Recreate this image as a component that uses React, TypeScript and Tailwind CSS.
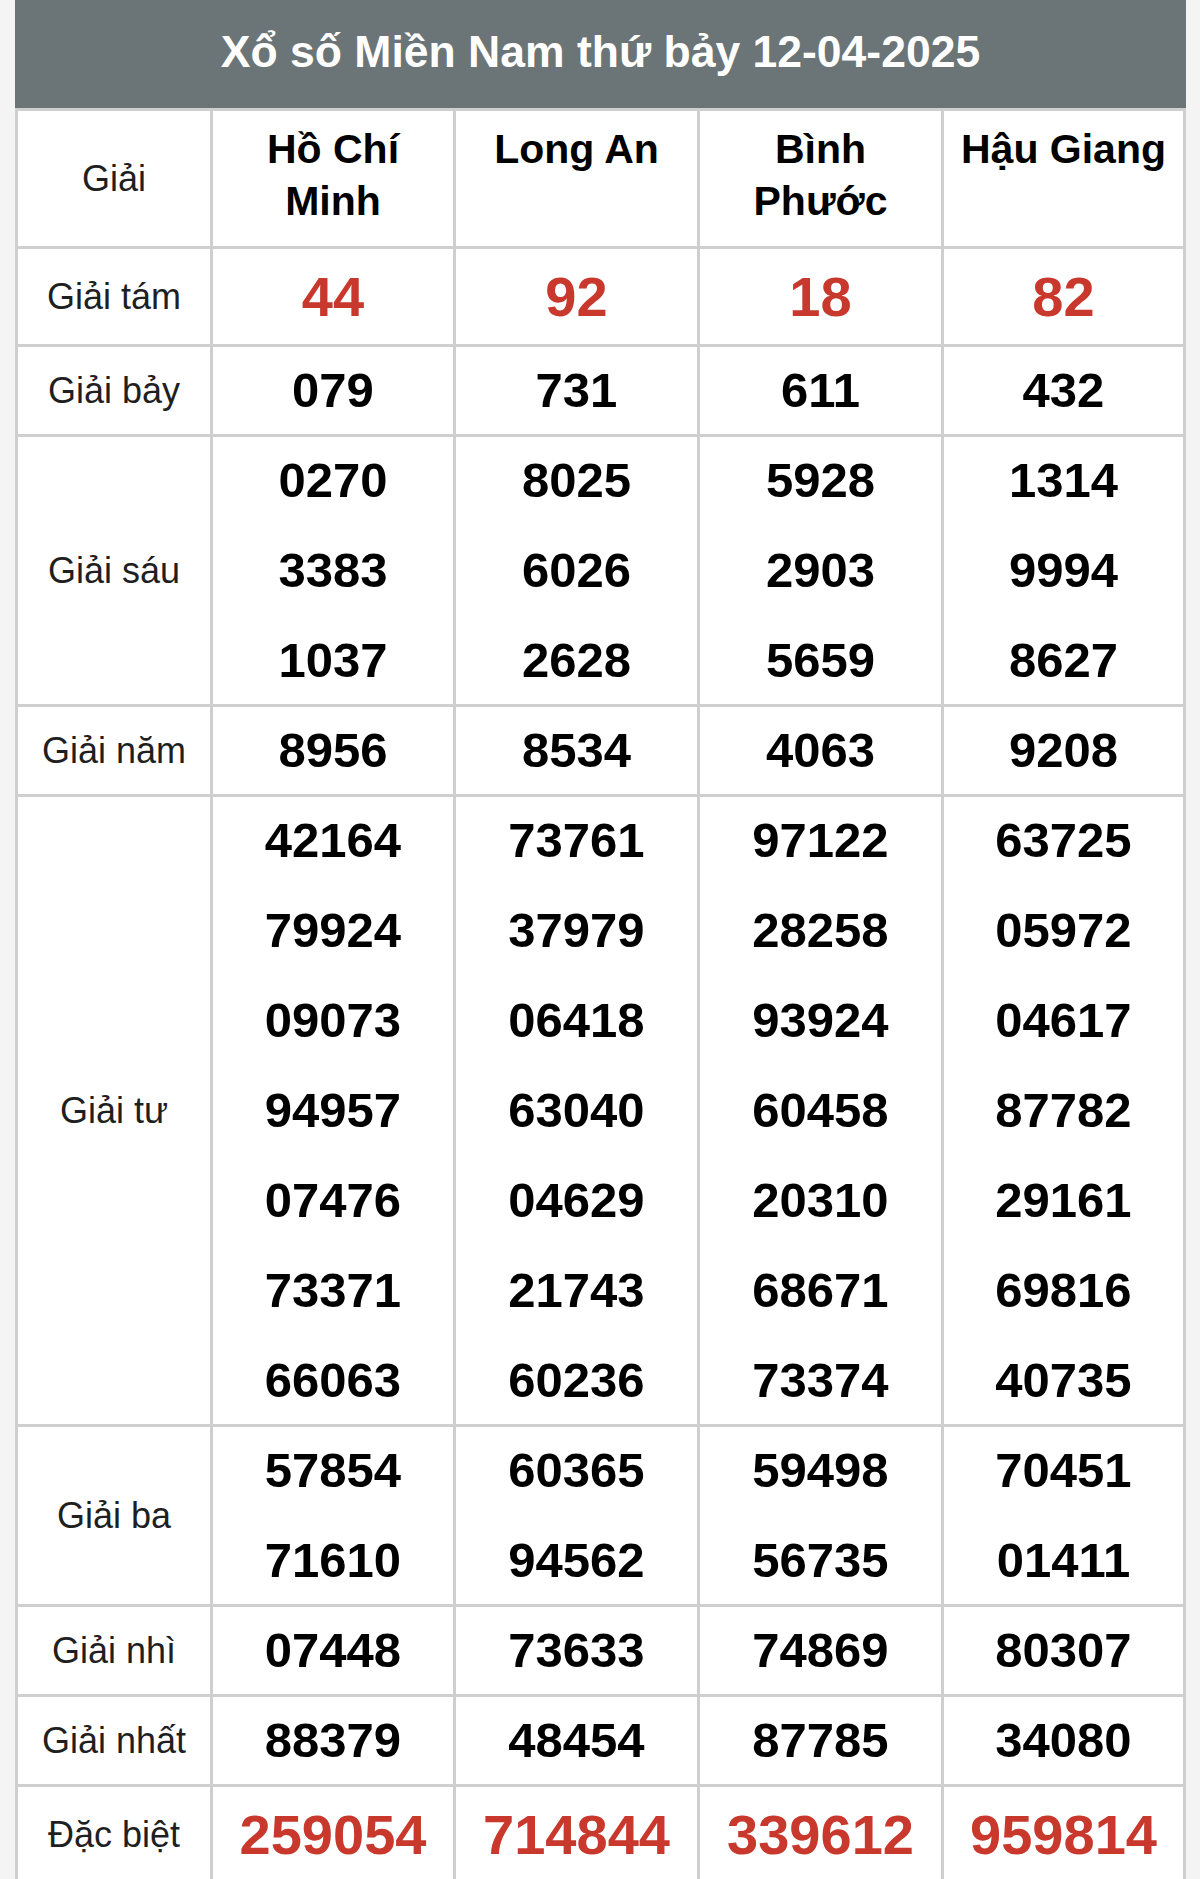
const provinces = [["Hồ Chí", "Minh"], ["Long An"], ["Bình", "Phước"], ["Hậu Giang"]];

type Row = {
  label: string;
  values: string[][];
  red?: boolean;
};

const rows: Row[] = [
  { label: "Giải tám", values: [["44"], ["92"], ["18"], ["82"]], red: true },
  { label: "Giải bảy", values: [["079"], ["731"], ["611"], ["432"]] },
  {
    label: "Giải sáu",
    values: [
      ["0270", "3383", "1037"],
      ["8025", "6026", "2628"],
      ["5928", "2903", "5659"],
      ["1314", "9994", "8627"],
    ],
  },
  { label: "Giải năm", values: [["8956"], ["8534"], ["4063"], ["9208"]] },
  {
    label: "Giải tư",
    values: [
      ["42164", "79924", "09073", "94957", "07476", "73371", "66063"],
      ["73761", "37979", "06418", "63040", "04629", "21743", "60236"],
      ["97122", "28258", "93924", "60458", "20310", "68671", "73374"],
      ["63725", "05972", "04617", "87782", "29161", "69816", "40735"],
    ],
  },
  {
    label: "Giải ba",
    values: [
      ["57854", "71610"],
      ["60365", "94562"],
      ["59498", "56735"],
      ["70451", "01411"],
    ],
  },
  { label: "Giải nhì", values: [["07448"], ["73633"], ["74869"], ["80307"]] },
  { label: "Giải nhất", values: [["88379"], ["48454"], ["87785"], ["34080"]] },
  { label: "Đặc biệt", values: [["259054"], ["714844"], ["339612"], ["959814"]], red: true },
];

export default function App() {
  return (
    <div className="min-h-screen bg-[#f4f4f4] pl-[15px] font-['Liberation_Sans',Arial,sans-serif]">
      <div className="w-[1171px]">
        <div className="flex h-[108px] items-center justify-center bg-[#6b7476] pb-1 text-[44.5px] font-bold text-white">
          Xổ số Miền Nam thứ bảy 12-04-2025
        </div>

        <div className="grid grid-cols-[192px_240px_241px_241px_239px] gap-[3px] bg-[#cfcfcf] p-[3px]">
          {/* header row */}
          <div className="flex h-[135px] items-center justify-center bg-white text-[36px] text-[#1f1f1f]">
            Giải
          </div>
          {provinces.map((lines) => (
            <div
              key={lines.join(" ")}
              className="h-[135px] bg-white pt-3 text-center text-[41px] leading-[52px] font-bold whitespace-nowrap text-black"
            >
              {lines.map((l) => (
                <div key={l}>{l}</div>
              ))}
            </div>
          ))}

          {rows.map((row) => (
            <Prize key={row.label} row={row} />
          ))}
        </div>
      </div>
    </div>
  );
}

function Prize({ row }: { row: Row }) {
  const lineH = row.red ? "h-[95px]" : "h-[87px]";
  const numCls = row.red
    ? "text-[56px] text-[#c8382c]"
    : "text-[49px] text-black";

  return (
    <>
      <div className="flex items-center justify-center bg-white text-[36px] text-[#1f1f1f]">
        {row.label}
      </div>
      {row.values.map((nums, i) => (
        <div key={i} className="flex flex-col gap-[3px] bg-white">
          {nums.map((n, j) => (
            <div
              key={j}
              className={`flex ${lineH} items-center justify-center font-bold ${numCls}`}
            >
              {n}
            </div>
          ))}
        </div>
      ))}
    </>
  );
}
